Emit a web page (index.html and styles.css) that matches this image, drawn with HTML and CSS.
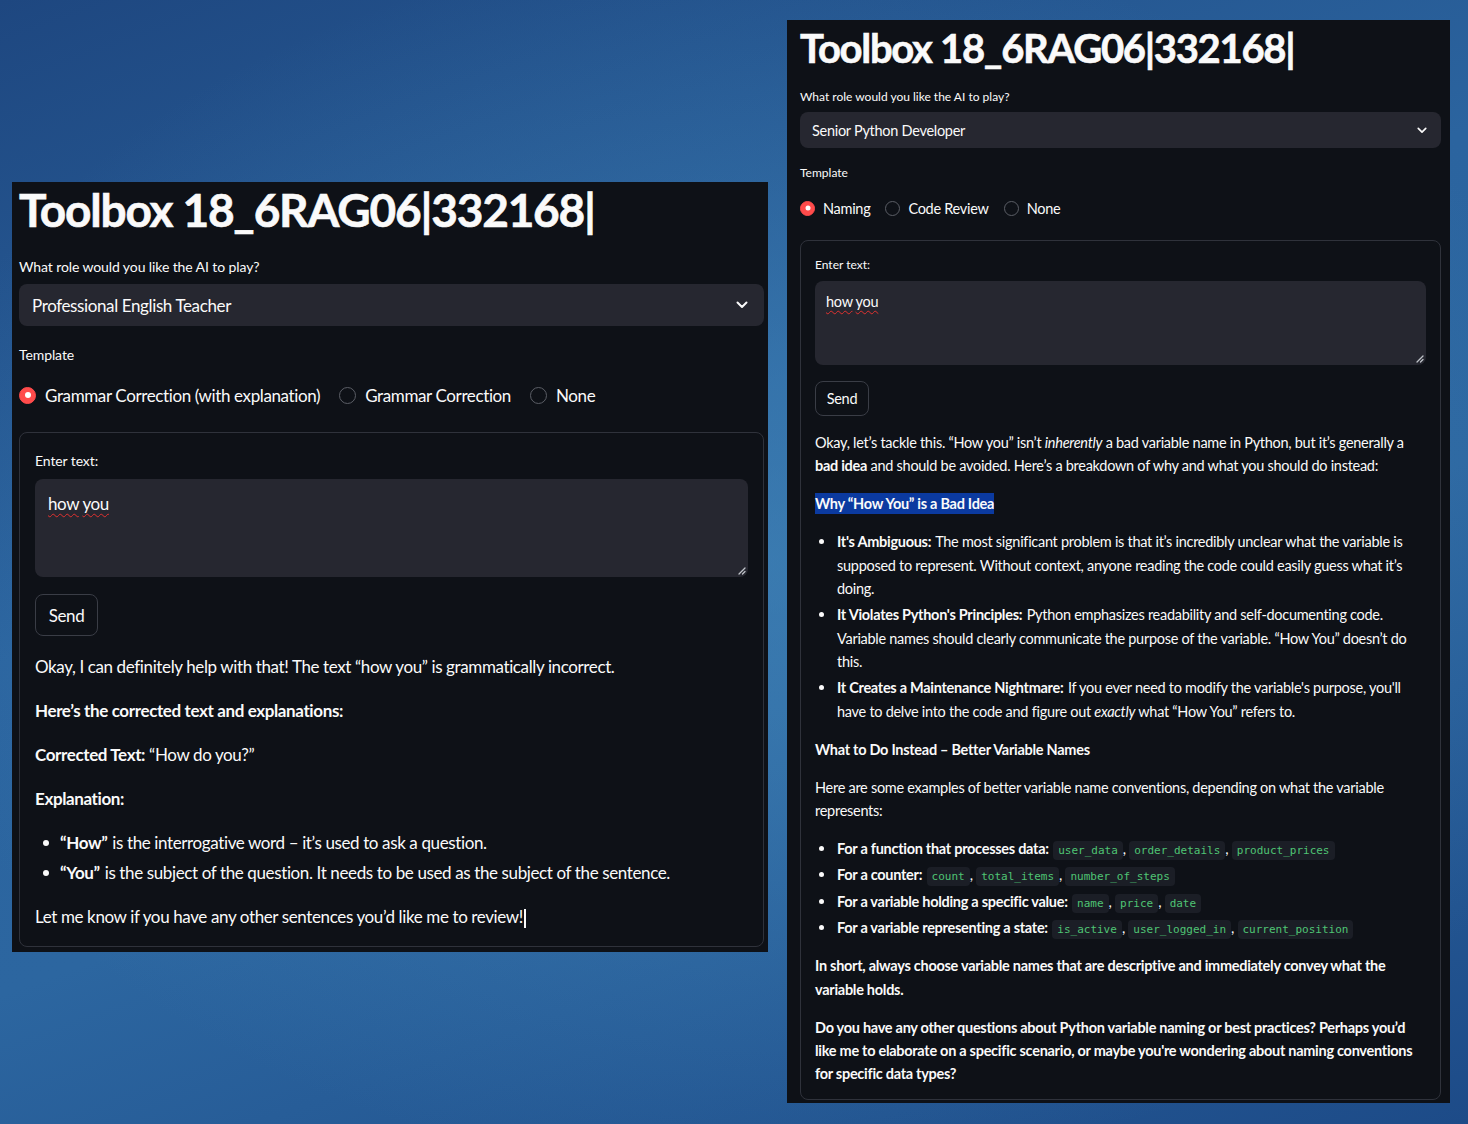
FILE: index.html
```html
<!DOCTYPE html>
<html lang="en">
<head>
<meta charset="utf-8">
<title>Toolbox</title>
<link rel="stylesheet" href="styles.css">
</head>
<body>
<div class="desk">

  <section class="win win-a">
    <h1 class="title">Toolbox 18_6RAG06|332168|</h1>
    <div class="label">What role would you like the AI to play?</div>
    <div class="select">
      <span>Professional English Teacher</span>
      <svg class="chev" viewBox="0 0 12 8"><path d="M1.5 1.5 6 6l4.5-4.5" fill="none" stroke="#fafafa" stroke-width="2" stroke-linecap="round" stroke-linejoin="round"/></svg>
    </div>
    <div class="label lbl-template">Template</div>
    <div class="radios">
      <label class="radio on"><span class="dot"></span>Grammar Correction (with explanation)</label>
      <label class="radio"><span class="dot"></span>Grammar Correction</label>
      <label class="radio"><span class="dot"></span>None</label>
    </div>
    <div class="form">
      <div class="label">Enter text:</div>
      <div class="textarea">
        <span class="typo">how</span> <span class="typo">you</span>
        <svg class="grip" viewBox="0 0 10 10"><path d="M9 3 3 9M9 6.5 6.5 9" stroke="#bfc3c9" stroke-width="1.3" stroke-linecap="round"/></svg>
      </div>
      <button class="btn">Send</button>
      <div class="md">
        <p>Okay, I can definitely help with that! The text “how you” is grammatically incorrect.</p>
        <p><b>Here’s the corrected text and explanations:</b></p>
        <p><b>Corrected Text:</b> “How do you?”</p>
        <p><b>Explanation:</b></p>
        <ul>
          <li><b>“How”</b> is the interrogative word – it’s used to ask a question.</li>
          <li><b>“You”</b> is the subject of the question. It needs to be used as the subject of the sentence.</li>
        </ul>
        <p>Let me know if you have any other sentences you’d like me to review!<span class="caret"></span></p>
      </div>
    </div>
  </section>

  <section class="win win-b">
    <h1 class="title">Toolbox 18_6RAG06|332168|</h1>
    <div class="label">What role would you like the AI to play?</div>
    <div class="select">
      <span>Senior Python Developer</span>
      <svg class="chev" viewBox="0 0 12 8"><path d="M1.5 1.5 6 6l4.5-4.5" fill="none" stroke="#fafafa" stroke-width="2" stroke-linecap="round" stroke-linejoin="round"/></svg>
    </div>
    <div class="label lbl-template">Template</div>
    <div class="radios">
      <label class="radio on"><span class="dot"></span>Naming</label>
      <label class="radio"><span class="dot"></span>Code Review</label>
      <label class="radio"><span class="dot"></span>None</label>
    </div>
    <div class="form">
      <div class="label">Enter text:</div>
      <div class="textarea">
        <span class="typo">how</span> <span class="typo">you</span>
        <svg class="grip" viewBox="0 0 10 10"><path d="M9 3 3 9M9 6.5 6.5 9" stroke="#bfc3c9" stroke-width="1.3" stroke-linecap="round"/></svg>
      </div>
      <button class="btn">Send</button>
      <div class="md">
        <p>Okay, let’s tackle this. “How you” isn’t <i>inherently</i> a bad variable name in Python, but it’s generally a <b>bad idea</b> and should be avoided. Here’s a breakdown of why and what you should do instead:</p>
        <p><b class="hl">Why “How You” is a Bad Idea</b></p>
        <ul>
          <li><b>It's Ambiguous:</b> The most significant problem is that it’s incredibly unclear what the variable is supposed to represent. Without context, anyone reading the code could easily guess what it’s doing.</li>
          <li><b>It Violates Python's Principles:</b> Python emphasizes readability and self-documenting code. Variable names should clearly communicate the purpose of the variable. “How You” doesn’t do this.</li>
          <li><b>It Creates a Maintenance Nightmare:</b> If you ever need to modify the variable's purpose, you'll have to delve into the code and figure out <i>exactly</i> what “How You” refers to.</li>
        </ul>
        <p><b>What to Do Instead – Better Variable Names</b></p>
        <p>Here are some examples of better variable name conventions, depending on what the variable represents:</p>
        <ul class="codes">
          <li><b>For a function that processes data:</b> <code>user_data</code>, <code>order_details</code>, <code>product_prices</code></li>
          <li><b>For a counter:</b> <code>count</code>, <code>total_items</code>, <code>number_of_steps</code></li>
          <li><b>For a variable holding a specific value:</b> <code>name</code>, <code>price</code>, <code>date</code></li>
          <li><b>For a variable representing a state:</b> <code>is_active</code>, <code>user_logged_in</code>, <code>current_position</code></li>
        </ul>
        <p><b>In short, always choose variable names that are descriptive and immediately convey what the variable holds.</b></p>
        <p><b>Do you have any other questions about Python variable naming or best practices? Perhaps you’d like me to elaborate on a specific scenario, or maybe you're wondering about naming conventions for specific data types?</b></p>
      </div>
    </div>
  </section>

</div>
</body>
</html>
```
FILE: styles.css
```css
* { box-sizing: border-box; }

html, body {
  margin: 0;
  padding: 0;
}

body {
  width: 1468px;
  height: 1124px;
  overflow: hidden;
  background:
    radial-gradient(ellipse 60% 55% at 52% 50%, rgba(70, 140, 190, 0.55) 0%, rgba(70, 140, 190, 0) 100%),
    linear-gradient(160deg, #1e4780 0%, #2b649f 40%, #2c66a0 60%, #1d4b88 100%);
  font-family: "Lato", "Noto Sans", sans-serif;
  color: #fafafa;
}

.desk {
  position: relative;
  width: 1468px;
  height: 1124px;
}

.win {
  position: absolute;
  background: #0e1117;
  display: flex;
  flex-direction: column;
}

.title {
  margin: 0;
  font-weight: 700;
  white-space: nowrap;
  color: #fafafa;
  -webkit-text-stroke: 0.6px #fafafa;
}

.label {
  color: #fafafa;
}

.select {
  background: #262730;
  border-radius: 8px;
  display: flex;
  align-items: center;
  justify-content: space-between;
}

.chev { display: block; }

.radios {
  display: flex;
  align-items: center;
}

.radio {
  display: flex;
  align-items: center;
}

.dot {
  border-radius: 50%;
  border: 1px solid #5b5e66;
  flex: none;
  position: relative;
}

.radio.on .dot {
  background: #ff4b4b;
  border-color: #ff4b4b;
}

.radio.on .dot::after {
  content: "";
  position: absolute;
  left: 50%;
  top: 50%;
  border-radius: 50%;
  background: #ffffff;
  transform: translate(-50%, -50%);
}

.form {
  flex: 1;
  border: 1px solid #2f323b;
  border-radius: 8px;
  display: flex;
  flex-direction: column;
  align-items: flex-start;
}

.textarea {
  align-self: stretch;
  background: #262730;
  border-radius: 8px;
  position: relative;
}

.typo {
  text-decoration: underline wavy #e0312f;
  text-decoration-thickness: 1.4px;
  text-decoration-skip-ink: none;
  text-underline-offset: 3px;
}

.grip {
  position: absolute;
  right: 2px;
  bottom: 2px;
  width: 10px;
  height: 10px;
}

.btn {
  background: #0e1117;
  border: 1px solid #3a3d46;
  border-radius: 8px;
  color: #fafafa;
  font-family: inherit;
  letter-spacing: inherit;
  padding: 0;
}

.md p { margin: 0; }
.md ul { margin: 0; padding: 0; list-style: none; }
.md li { position: relative; }
.md li::before {
  content: "";
  position: absolute;
  border-radius: 50%;
  background: #fafafa;
}
.md b { font-weight: 700; }
.md li > b { margin-right: 1px; }

.caret {
  display: inline-block;
  width: 2px;
  background: #fafafa;
  vertical-align: middle;
}

/* ---------- left window ---------- */
.win-a {
  left: 12px;
  top: 182px;
  width: 756px;
  height: 770px;
  padding: 0 4px 5px 7px;
  letter-spacing: -0.38px;
}
.win-a .title { font-size: 46px; line-height: 56px; letter-spacing: -1.2px; }
.win-a .label { font-size: 14px; line-height: 20px; letter-spacing: -0.1px; }
.win-a .title + .label { margin-top: 19px; }
.win-a .select { margin-top: 7px; height: 42px; padding: 0 16px 0 13px; font-size: 17px; }
.win-a .chev { width: 12px; height: 8px; }
.win-a .lbl-template { margin-top: 19px; }
.win-a .radios { margin-top: 19px; height: 22px; font-size: 17px; }
.win-a .radio { margin-right: 19px; }
.win-a .dot { width: 17px; height: 17px; margin-right: 9px; }
.win-a .radio.on .dot::after { width: 6px; height: 6px; }
.win-a .form { margin-top: 26px; padding: 18px 15px 0 15px; }
.win-a .textarea { margin-top: 8px; height: 98px; padding: 14px 13px; font-size: 17px; line-height: 22px; }
.win-a .btn { margin-top: 17px; height: 42px; width: 63px; font-size: 17px; }
.win-a .md { margin-top: 16px; font-size: 17px; line-height: 30px; }
.win-a .md > * + * { margin-top: 14px; }
.win-a .md ul { padding-left: 25px; }
.win-a .md li::before { left: -17px; top: 12px; width: 6px; height: 6px; }
.win-a .caret { height: 19px; margin-left: 1px; }

/* ---------- right window ---------- */
.win-b {
  left: 787px;
  top: 20px;
  width: 663px;
  height: 1083px;
  padding: 0 9px 3px 13px;
  letter-spacing: -0.28px;
}
.win-b .title { font-size: 40px; line-height: 56px; letter-spacing: -1.3px; }
.win-b .label { font-size: 12px; line-height: 18px; letter-spacing: 0; }
.win-b .title + .label { margin-top: 12px; }
.win-b .select { margin-top: 6px; height: 36px; padding: 0 14px 0 12px; font-size: 14.5px; }
.win-b .chev { width: 10px; height: 7px; }
.win-b .lbl-template { margin-top: 16px; }
.win-b .radios { margin-top: 16px; height: 20px; font-size: 14.5px; }
.win-b .radio { margin-right: 15px; }
.win-b .dot { width: 15px; height: 15px; margin-right: 8px; }
.win-b .radio.on .dot::after { width: 5px; height: 5px; }
.win-b .form { margin-top: 22px; padding: 15px 14px 0 14px; }
.win-b .textarea { margin-top: 7px; height: 84px; padding: 11px 11px; font-size: 14.5px; line-height: 19px; }
.win-b .btn { margin-top: 16px; height: 35px; width: 54px; font-size: 14.5px; }
.win-b .md { margin-top: 15px; font-size: 14.5px; line-height: 23.3px; }
.win-b .md > * + * { margin-top: 14.7px; }
.win-b .md ul { padding-left: 22px; }
.win-b .md li + li { margin-top: 3.2px; }
.win-b .md li::before { left: -18px; top: 9px; width: 5px; height: 5px; }
.win-b .hl { background: #0b3aa0; padding: 2px 0; }
.win-b code {
  font-family: "DejaVu Sans Mono", "Liberation Mono", monospace;
  font-size: 11px;
  line-height: 1;
  letter-spacing: 0;
  color: #4fc474;
  background: #1b1e26;
  border-radius: 4px;
  padding: 3px 5px;
}
```
